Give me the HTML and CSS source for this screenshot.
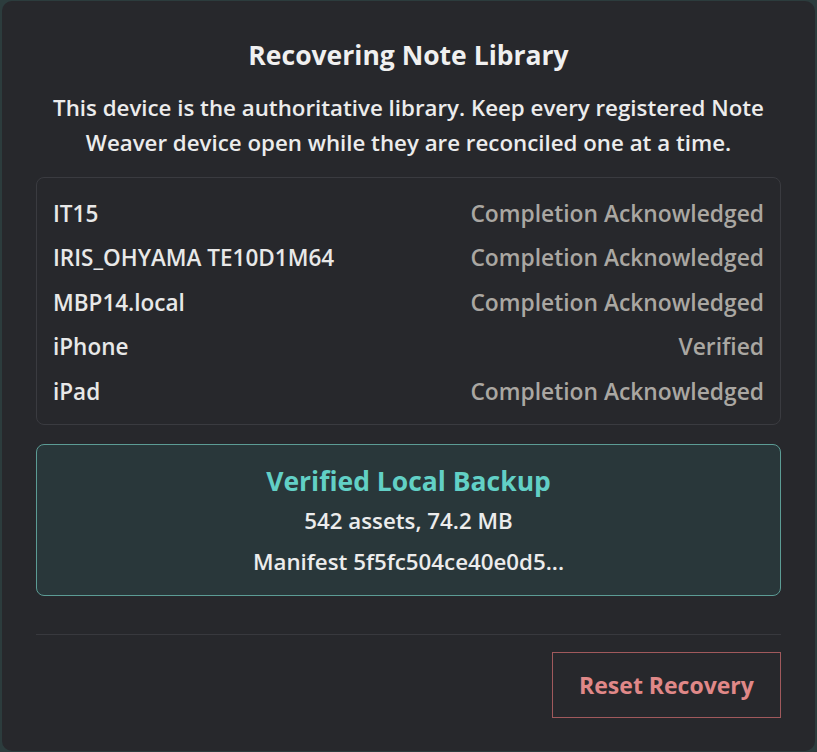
FILE: index.html
```html
<!DOCTYPE html>
<html lang="en">
<head>
<meta charset="utf-8">
<title>Recovering Note Library</title>
<link rel="stylesheet" href="styles.css">
</head>
<body>
<div class="modal">
  <h1 class="title">Recovering Note Library</h1>
  <p class="intro">This device is the authoritative library. Keep every registered Note Weaver device open while they are reconciled one at a time.</p>
  <ul class="devices">
    <li class="device"><span class="name">IT15</span><span class="status">Completion Acknowledged</span></li>
    <li class="device"><span class="name">IRIS_OHYAMA TE10D1M64</span><span class="status">Completion Acknowledged</span></li>
    <li class="device"><span class="name">MBP14.local</span><span class="status">Completion Acknowledged</span></li>
    <li class="device"><span class="name">iPhone</span><span class="status">Verified</span></li>
    <li class="device"><span class="name">iPad</span><span class="status">Completion Acknowledged</span></li>
  </ul>
  <div class="backup">
    <div class="backup-title">Verified Local Backup</div>
    <div class="backup-line">542 assets, 74.2 MB</div>
    <div class="backup-line">Manifest 5f5fc504ce40e0d5...</div>
  </div>
  <div class="footer">
    <button class="reset" type="button">Reset Recovery</button>
  </div>
</div>
</body>
</html>
```
FILE: styles.css
```css
html, body {
  margin: 0;
  padding: 0;
}
body {
  background: #2c3c3d;
  font-family: "Open Sans", "Noto Sans", sans-serif;
  width: 817px;
  height: 752px;
  overflow: hidden;
}
.modal {
  box-sizing: border-box;
  margin: 1px 2px 0 2px;
  width: 813px;
  height: 750px;
  background: #27282c;
  border-radius: 10px;
  padding: 36px 34px 0 34px;
  display: flex;
  flex-direction: column;
  color: #ececec;
}
.title {
  margin: 0;
  text-align: center;
  font-size: 26.5px;
  font-weight: 700;
  line-height: 36px;
  color: #f0f0f0;
}
.intro {
  margin: 17px 0 0 0;
  text-align: center;
  font-size: 22.3px;
  font-weight: 600;
  line-height: 35px;
  color: #ececec;
}
.devices {
  list-style: none;
  margin: 17px 0 0 0;
  padding: 13px 16px 10px 16px;
  border: 1px solid #3a3b40;
  border-radius: 8px;
  display: flex;
  flex-direction: column;
}
.device {
  display: flex;
  justify-content: space-between;
  align-items: center;
  height: 44.5px;
  font-size: 22.5px;
  font-weight: 600;
}
.name {
  color: #e8e8e8;
}
.status {
  font-size: 22.8px;
  color: #aaa7a2;
}
.backup {
  margin-top: 19px;
  border: 1.5px solid #5c9c95;
  border-radius: 8px;
  background: #29373a;
  padding: 17px 0 13px 0;
  display: flex;
  flex-direction: column;
  align-items: center;
}
.backup-title {
  font-size: 26.5px;
  font-weight: 700;
  line-height: 38px;
  color: #62d0c6;
}
.backup-line {
  font-size: 22.3px;
  font-weight: 600;
  line-height: 41px;
  color: #ececec;
}
.footer {
  margin-top: 38px;
  border-top: 1px solid #38393e;
  padding-top: 17px;
  display: flex;
  justify-content: flex-end;
}
.reset {
  width: 229px;
  height: 66px;
  background: transparent;
  border: 1px solid #a0595c;
  border-radius: 0;
  color: #e08888;
  font-family: "Open Sans", "Noto Sans", sans-serif;
  font-size: 23px;
  font-weight: 700;
  cursor: pointer;
}
```
